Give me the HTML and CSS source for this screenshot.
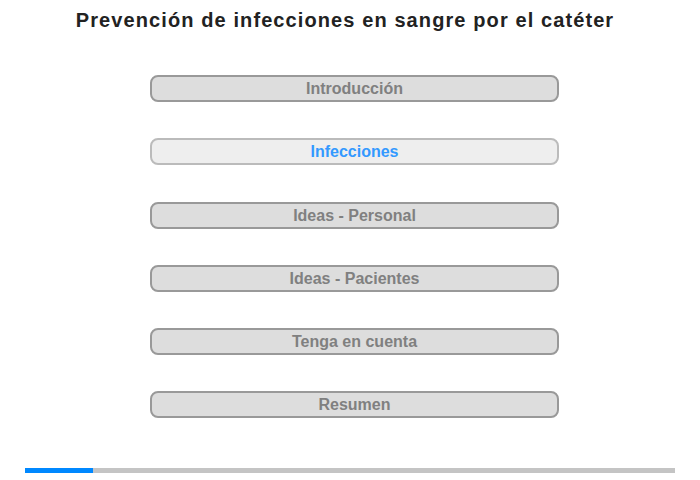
FILE: index.html
```html
<!DOCTYPE html>
<html lang="es">
<head>
<meta charset="utf-8">
<title>Prevención de infecciones en sangre por el catéter</title>
<link rel="stylesheet" href="styles.css">
</head>
<body>
<div class="page">
  <h1 class="title">Prevención de infecciones en sangre por el catéter</h1>
  <nav class="menu">
    <div class="item">Introducción</div>
    <div class="item active">Infecciones</div>
    <div class="item">Ideas - Personal</div>
    <div class="item">Ideas - Pacientes</div>
    <div class="item">Tenga en cuenta</div>
    <div class="item">Resumen</div>
  </nav>
  <div class="progress"><div class="progress-fill" style="width: 68px"></div></div>
</div>
</body>
</html>
```
FILE: styles.css
```css
html, body {
  margin: 0;
  padding: 0;
  background: #fff;
}
body {
  font-family: "Liberation Sans", Arial, sans-serif;
}
.page {
  width: 700px;
  height: 480px;
  display: flex;
  flex-direction: column;
}
.title {
  margin: 8px 0 0 0;
  padding-right: 10px;
  font-size: 20px;
  line-height: 24px;
  letter-spacing: 1.1px;
  font-weight: bold;
  color: #222;
  text-align: center;
}
.menu {
  margin: 43px 0 0 150px;
  width: 409px;
  display: flex;
  flex-direction: column;
  gap: 36.3px;
}
.item {
  box-sizing: border-box;
  height: 27px;
  border: 2px solid #999;
  border-radius: 8px;
  background: #ddd;
  color: #808080;
  font-size: 16px;
  font-weight: bold;
  line-height: 23px;
  text-align: center;
}
.item.active {
  background: #eee;
  border-color: #bbb;
  color: #3399ff;
}
.progress {
  margin: 50px 0 0 25px;
  width: 650px;
  height: 5px;
  background: #c4c4c4;
}
.progress-fill {
  height: 100%;
  background: #0088ff;
}
```
